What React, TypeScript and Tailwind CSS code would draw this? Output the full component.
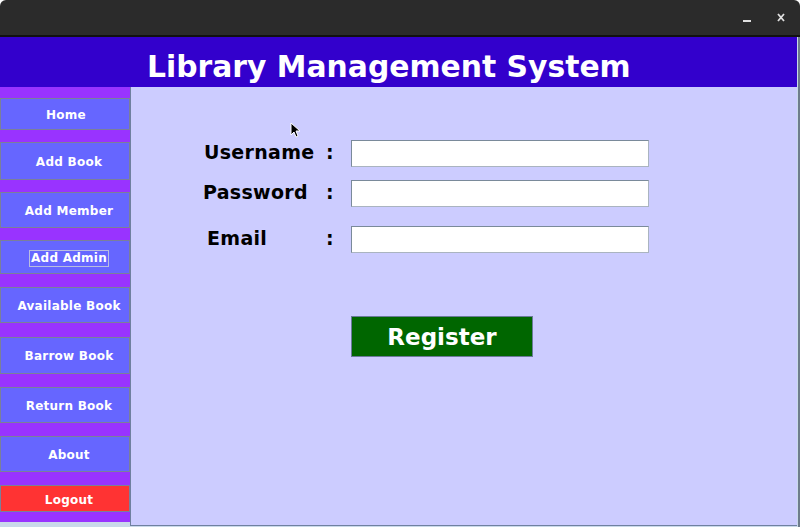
const menuItems = [
  { label: "Home", mt: "mt-[11px]", h: "h-[32px]", pl: "pl-[2px]" },
  { label: "Add Book", mt: "mt-[12px]", h: "h-[38px]", pl: "pl-[8px]" },
  { label: "Add Member", mt: "mt-[12px]", h: "h-[36px]", pl: "pl-[8px]" },
  { label: "Add Admin", mt: "mt-[12px]", h: "h-[34px]", pl: "pl-[8px]", focused: true },
  { label: "Available Book", mt: "mt-[13px]", h: "h-[36px]", pl: "pl-[8px]" },
  { label: "Barrow Book", mt: "mt-[14px]", h: "h-[37px]", pl: "pl-[8px]" },
  { label: "Return Book", mt: "mt-[13px]", h: "h-[36px]", pl: "pl-[8px]" },
  { label: "About", mt: "mt-[13px]", h: "h-[36px]", pl: "pl-[8px]" },
];

const fields = [
  { label: "Username", mt: "mt-[53px]", pl: "pl-[73px]" },
  { label: "Password", mt: "mt-[13px]", pl: "pl-[72px]" },
  { label: "Email", mt: "mt-[19px]", pl: "pl-[76px]" },
];

function TitleBar() {
  return (
    <div className="flex h-[37px] items-center justify-end rounded-t-[6px] border-b-2 border-[#111111] bg-[#2b2b2b] pr-[15px]">
      <div className="mt-[6px] h-[2px] w-[8px] bg-[#e0e0e0]" />
      <svg className="ml-[26px]" width="8" height="9" viewBox="0 0 8 9">
        <path d="M1 1 L7 8 M7 1 L1 8" stroke="#e0e0e0" strokeWidth="1.8" />
      </svg>
    </div>
  );
}

function Sidebar() {
  return (
    <div className="mb-[5px] flex w-[130px] flex-col bg-[#9933ff]">
      {menuItems.map((item) => (
        <button
          key={item.label}
          type="button"
          className={`${item.mt} ${item.h} ${item.pl} flex w-full items-center justify-center border border-[#7b7f99] bg-[#6666ff] pt-[2px] text-[12px] font-bold tracking-[0.25px] text-white`}
        >
          <span
            className={
              item.focused
                ? "border border-[#b9bde0] px-[1px] leading-[15px]"
                : "leading-[15px]"
            }
          >
            {item.label}
          </span>
        </button>
      ))}
      <button
        type="button"
        className="mt-[13px] flex h-[27px] w-full items-center justify-center border border-[#7b7f99] bg-[#ff3333] pl-[8px] pt-[2px] text-[12px] font-bold tracking-[0.25px] text-white"
      >
        Logout
      </button>
    </div>
  );
}

function RegisterForm() {
  return (
    <div className="relative mb-[1px] flex flex-1 flex-col border-b border-l border-[#6f80a0] bg-[#ccccff]">
      {fields.map((f) => (
        <div key={f.label} className={`${f.mt} flex items-center`}>
          <div className={`${f.pl} flex w-[220px] items-center pb-[4px] text-[19px] font-bold tracking-[0.3px] text-black`}>
            <span className="flex-1 leading-[22px]">{f.label}</span>
            <span className="w-[25px] leading-[22px]">:</span>
          </div>
          <input
            type="text"
            className="h-[27px] w-[298px] border border-[#7a8a9a] border-b-[#aab4c0] border-r-[#aab4c0] bg-white outline-none"
          />
        </div>
      ))}
      <div className="mt-[63px] pl-[220px]">
        <button
          type="button"
          className="flex h-[41px] w-[182px] items-center justify-center border border-[#6a7a9a] bg-[#006600] pt-[2px] text-[23px] font-bold text-white"
        >
          Register
        </button>
      </div>

      {/* mouse pointer */}
      <svg className="absolute left-[159px] top-[35px]" width="11" height="16" viewBox="0 0 11 16">
        <path d="M1 1 L1 13 L4 10 L6 15 L8 14 L6 9 L10 9 Z" fill="#000" stroke="#fff" strokeWidth="1" />
      </svg>
    </div>
  );
}

export default function App() {
  return (
    <div
      className="flex h-[527px] w-[800px] flex-col bg-white"
      style={{ fontFamily: '"DejaVu Sans", Verdana, sans-serif' }}
    >
      <TitleBar />
      <div className="flex flex-1 flex-col border-r-2 border-[#6e7c8c] bg-[#c9d9ea] pr-px">
        <div className="h-[50px] bg-[#3300cc] pl-[147px] pt-[12px] text-[29.8px] font-bold leading-[35px] text-white">
          Library Management System
        </div>
        <div className="flex flex-1">
          <Sidebar />
          <RegisterForm />
        </div>
      </div>
    </div>
  );
}
